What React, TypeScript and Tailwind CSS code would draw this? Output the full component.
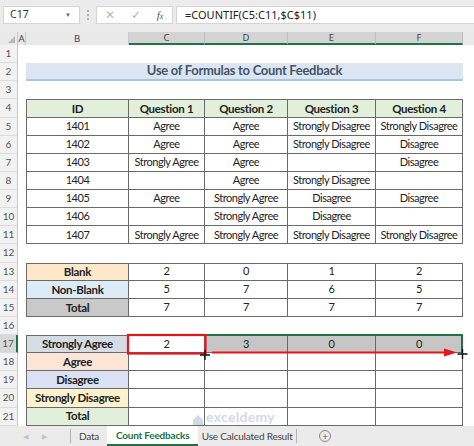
import React from 'react';

const W = ['w-[103px]', 'w-[76px]', 'w-[83px]', 'w-[88px]', 'w-[87px]'];
const line = 'border-[#6a6a6a]';

type C = { text?: string; cls?: string };

function Row({ n, cells, top, table, active }: { n: number; cells?: C[]; top?: boolean; table?: boolean; active?: boolean }) {
  return (
    <div className="flex h-[18.14px]">
      <div className={`w-[18px] shrink-0 flex items-center justify-center text-[10px] text-[#555] tracking-normal border-b border-[#dcdcdc] ${active ? 'bg-[#d8d8d8] border-r-2 border-r-[#217346]' : 'bg-[#f2f2f2] border-r border-r-[#c8c8c8]'}`}>{n}</div>
      <div className="w-[8px] shrink-0" />
      {cells
        ? cells.map((c, i) => (
            <div
              key={i}
              className={`${W[i]} shrink-0 flex items-center justify-center whitespace-nowrap ${table ? `border-r border-b ${line}` : ''} ${table && i === 0 ? `border-l ${line}` : ''} ${table && top ? `border-t ${line}` : ''} ${c.cls ?? ''}`}
            >
              {c.text}
            </div>
          ))
        : null}
      <div className="flex-1" />
    </div>
  );
}

const data = [
  [1401, 'Agree', 'Agree', 'Strongly Disagree', 'Strongly Disagree'],
  [1402, 'Agree', 'Agree', 'Strongly Disagree', 'Disagree'],
  [1403, 'Strongly Agree', 'Agree', '', 'Disagree'],
  [1404, '', 'Agree', 'Strongly Disagree', ''],
  [1405, 'Agree', 'Strongly Agree', 'Disagree', 'Disagree'],
  [1406, '', 'Strongly Agree', 'Disagree', ''],
  [1407, 'Strongly Agree', 'Strongly Agree', 'Strongly Disagree', 'Strongly Disagree'],
];

const counts = [
  { label: 'Blank', bg: 'bg-[#fde9c9]', v: ['2', '0', '1', '2'] },
  { label: 'Non-Blank', bg: 'bg-[#ddebf7]', v: ['5', '7', '6', '5'] },
  { label: 'Total', bg: 'bg-[#c9c9c9]', v: ['7', '7', '7', '7'] },
];

const feedback = [
  { label: 'Agree', bg: 'bg-[#fce4d6]' },
  { label: 'Disagree', bg: 'bg-[#d9e1f2]' },
  { label: 'Strongly Disagree', bg: 'bg-[#fff2cc]' },
  { label: 'Total', bg: 'bg-[#e2efda]' },
];

export default function App() {
  const hd = 'font-bold text-[11.5px] tracking-[-0.3px]';
  return (
    <div className="relative w-[474px] h-[446px] overflow-hidden bg-white text-[11px] text-[#222] tracking-[-0.45px]" style={{ fontFamily: 'Lato, "Liberation Sans", sans-serif' }}>
      {/* formula bar */}
      <div className="h-[32px] bg-[#ebebeb] flex items-start pt-[6px] pl-[3px] text-[10.5px] text-[#333] tracking-normal" style={{ fontFamily: '"Noto Sans", "Open Sans", sans-serif' }}>
        <div className="w-[77px] h-[18px] bg-white border border-[#d4d4d4] flex items-center pl-[6px] pr-[8px] justify-between">
          <span>C17</span>
          <span className="text-[6px] text-[#666]">▼</span>
        </div>
        <div className="w-[16px] h-[18px] flex flex-col items-center justify-center gap-[2px]">
          <span className="w-[2px] h-[2px] bg-[#b0b0b0]" />
          <span className="w-[2px] h-[2px] bg-[#b0b0b0]" />
          <span className="w-[2px] h-[2px] bg-[#b0b0b0]" />
        </div>
        <div className="w-[77px] h-[18px] bg-white border border-[#d4d4d4] flex items-center">
          <span className="w-[26px] text-center text-[12px] text-[#b5b5b5]">✕</span>
          <span className="w-[26px] text-center text-[12px] text-[#b5b5b5]">✓</span>
          <span className="w-[22px] text-center italic text-[11px] text-[#555]" style={{ fontFamily: '"Liberation Serif", serif' }}>f<span className="text-[8px]">x</span></span>
        </div>
        <div className="flex-1 h-[18px] ml-[3px] bg-white border border-[#d4d4d4] border-r-0 flex items-center pl-[8px] text-[11px] text-[#222]">=COUNTIF(C5:C11,$C$11)</div>
      </div>

      {/* column headers */}
      <div className="flex h-[13px] bg-[#e9e9e9] text-[9.5px] text-[#444] leading-none tracking-normal" style={{ fontFamily: '"Noto Sans", "Open Sans", sans-serif' }}>
        <div className="w-[18px] flex items-end justify-end pr-[2px] pb-[2px] border-r border-[#c8c8c8]">
          <svg width="7" height="7" viewBox="0 0 7 7"><path d="M7 0 L7 7 L0 7 Z" fill="#b8b8b8" /></svg>
        </div>
        <div className="w-[8px] flex items-center justify-center border-r border-[#c8c8c8]">A</div>
        <div className="w-[103px] flex items-center justify-center border-r border-[#c8c8c8]">B</div>
        <div className="w-[76px] flex items-center justify-center bg-[#d4d4d4] border-r border-[#bdbdbd] border-b-2 border-b-[#217346]">C</div>
        <div className="w-[83px] flex items-center justify-center bg-[#d4d4d4] border-r border-[#bdbdbd] border-b-2 border-b-[#217346]">D</div>
        <div className="w-[88px] flex items-center justify-center bg-[#d4d4d4] border-r border-[#bdbdbd] border-b-2 border-b-[#217346]">E</div>
        <div className="w-[87px] flex items-center justify-center bg-[#d4d4d4] border-r border-[#bdbdbd] border-b-2 border-b-[#217346]">F</div>
        <div className="flex-1" />
      </div>

      {/* sheet */}
      <div>
        <Row n={1} />
        <div className="flex h-[18.14px]">
          <div className="w-[18px] shrink-0 flex items-center justify-center text-[10px] text-[#555] tracking-normal bg-[#f2f2f2] border-b border-[#dcdcdc] border-r border-r-[#c8c8c8]">2</div>
          <div className="w-[8px] shrink-0" />
          <div className="w-[437px] shrink-0 flex items-center justify-center bg-[#dce6f1] border-b-2 border-[#a9c4e4] font-bold text-[13px] tracking-[-0.3px] text-[#44546a]">Use of Formulas to Count Feedback</div>
          <div className="flex-1" />
        </div>
        <Row n={3} />
        <Row
          n={4}
          table
          top
          cells={['ID', 'Question 1', 'Question 2', 'Question 3', 'Question 4'].map(t => ({ text: t, cls: `${hd} bg-[#e2efda]` }))}
        />
        {data.map((r, i) => (
          <Row key={i} n={5 + i} table cells={r.map(v => ({ text: String(v) }))} />
        ))}
        <Row n={12} />
        {counts.map((c, i) => (
          <Row
            key={c.label}
            n={13 + i}
            table
            top={i === 0}
            cells={[{ text: c.label, cls: `${hd} ${c.bg}` }, ...c.v.map(v => ({ text: v }))]}
          />
        ))}
        <Row n={16} />
        <Row
          n={17}
          table
          top
          active
          cells={[
            { text: 'Strongly Agree', cls: `${hd} bg-[#d6dce4]` },
            { text: '2' },
            { text: '3', cls: 'bg-[#c6c6c6]' },
            { text: '0', cls: 'bg-[#c6c6c6]' },
            { text: '0', cls: 'bg-[#c6c6c6]' },
          ]}
        />
        {feedback.map((f, i) => (
          <Row key={f.label + i} n={18 + i} table cells={[{ text: f.label, cls: `${hd} ${f.bg}` }, {}, {}, {}, {}]} />
        ))}
      </div>

      {/* selection outline, red box and arrow */}
      <div className="absolute left-[205px] top-[334px] w-[258px] h-[19px] border-t-2 border-r-2 border-[#217346] pointer-events-none" />
      <svg className="absolute left-0 top-0 pointer-events-none" width="474" height="446">
        <rect x="128" y="335" width="77.5" height="18.5" fill="none" stroke="#e8141c" strokeWidth="2.2" />
        <line x1="212" y1="352.5" x2="447" y2="352.5" stroke="#e8141c" strokeWidth="2" />
        <path d="M444 348.5 L457 352.5 L444 356.5 Z" fill="#e8141c" />
        <path d="M205 350 V360 M200 355 H210" stroke="#111" strokeWidth="1.4" />
        <path d="M462.5 349 V359 M457.5 354 H467.5" stroke="#111" strokeWidth="1.4" />
      </svg>

      {/* watermark */}
      <div className="absolute left-[192px] top-[410px] flex items-center gap-[2px] opacity-40 pointer-events-none">
        <svg width="12" height="12" viewBox="0 0 12 12"><path d="M1 6 L6 1 L11 6 V11 H1 Z" fill="#8aa4c8" /></svg>
        <div className="flex flex-col leading-none">
          <span className="text-[14px] leading-[14px] text-[#8aa4c8] font-bold tracking-[0.3px]">exceldemy</span>
          <span className="mt-[1px] text-[4px] leading-[4px] text-[#8aa4c8] tracking-[0.5px]">EXCEL · DATA · BI</span>
        </div>
      </div>

      {/* sheet tabs */}
      <div className="absolute left-0 right-0 bottom-0 h-[20px] bg-[#ebebeb] flex items-stretch text-[10px] text-[#444] tracking-[-0.2px]">
        <div className="w-[70px] flex items-center justify-center gap-[14px] text-[7px] text-[#c4c4c4]">
          <span>◀</span>
          <span>▶</span>
        </div>
        <div className="w-px my-[3px] bg-[#b5b5b5]" />
        <div className="px-[8px] flex items-center">Data</div>
        <div className="w-[91px] flex items-center justify-center bg-white text-[#217346] font-bold border-b-2 border-[#217346]">Count Feedbacks</div>
        <div className="w-[98px] flex items-center justify-center">Use Calculated Result</div>
        <div className="w-px my-[3px] bg-[#b5b5b5]" />
        <div className="ml-[22px] flex items-center">
          <span className="w-[12px] h-[12px] rounded-full border border-[#888] flex items-center justify-center text-[10px] leading-none text-[#666]">+</span>
        </div>
      </div>
    </div>
  );
}
